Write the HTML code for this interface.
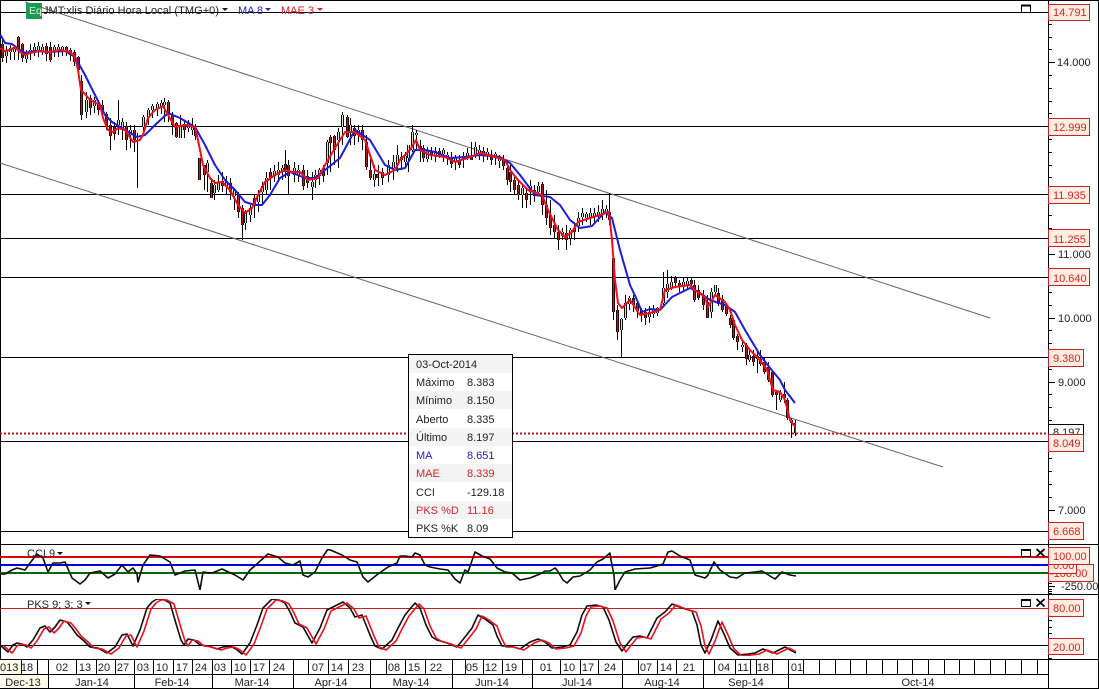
<!DOCTYPE html>
<html><head><meta charset="utf-8"><title>JMT chart</title>
<style>
html,body{margin:0;padding:0;background:#fff;width:1099px;height:689px;overflow:hidden}
svg{display:block}
text{font-family:"Liberation Sans",sans-serif;font-size:11px;fill:#222}
.r{fill:#d8232a}.b{fill:#2222cc}
.tag{fill:#fdeee0;stroke:#c8202c;stroke-width:1}
.c{text-anchor:middle}
.s{text-anchor:start}
</style></head><body>
<svg width="1099" height="689" viewBox="0 0 1099 689" xmlns="http://www.w3.org/2000/svg">
<defs>
<filter id="soft" x="0" y="0" width="100%" height="100%" filterUnits="objectBoundingBox"><feGaussianBlur stdDeviation="0.3"/></filter>
<path id="w" d="M2.5 40V62M6.5 46V63M10.5 45V60M14.5 46V60M18.5 36V60M22.5 43V62M26.5 50V63M30.5 44V60M34.5 43V56M38.5 42V57M42.5 44V55M46.5 43V61M50.5 42V62M54.5 45V57M58.5 44V57M62.5 46V56M66.5 46V56M70.5 48V61M74.5 50V66M78.5 56V78M81.5 75V120M86.5 92V118M90.5 95V115M94.5 97V113M98.5 100V115M102.5 100V118M106.5 112V130M110.5 118V150M114.5 122V140M118.5 100V135M122.5 118V140M126.5 122V150M130.5 125V148M134.5 125V152M137.5 133V188M143.5 115V135M148.5 108V125M152.5 104V118M157.5 102V116M161.5 100V114M164.5 98V122M168.5 100V122M172.5 112V135M176.5 122V138M180.5 115V138M184.5 120V138M188.5 120V132M192.5 118V135M195.5 124V140M199.5 158V180M204.5 165V190M207.5 160V192M211.5 178V198M214.5 180V200M218.5 175V192M222.5 172V192M226.5 176V195M230.5 178V200M234.5 188V210M238.5 192V218M242.5 205V240M245.5 210V230M250.5 205V222M254.5 195V218M258.5 190V212M262.5 182V205M266.5 172V195M270.5 168V190M274.5 165V182M278.5 162V182M282.5 165V180M285.5 150V178M288.5 160V195M294.5 162V182M298.5 165V182M303.5 165V190M307.5 170V188M312.5 172V200M315.5 170V188M319.5 168V185M323.5 165V182M327.5 140V175M330.5 135V172M334.5 135V165M338.5 128V168M342.5 112V145M347.5 115V138M350.5 118V145M354.5 125V145M358.5 125V142M362.5 125V150M366.5 135V170M370.5 155V180M374.5 165V187M378.5 165V186M382.5 168V185M388.5 160V182M393.5 155V180M397.5 145V172M401.5 152V170M405.5 152V168M408.5 145V172M412.5 125V152M416.5 130V150M420.5 140V162M423.5 145V162M427.5 147V162M431.5 147V160M435.5 147V162M439.5 148V158M443.5 148V162M447.5 152V165M451.5 152V168M455.5 155V170M459.5 155V168M463.5 152V168M467.5 148V160M471.5 142V160M475.5 142V158M479.5 145V160M483.5 147V162M487.5 148V160M491.5 150V165M495.5 152V165M499.5 155V168M503.5 155V170M507.5 160V185M510.5 165V192M514.5 175V195M518.5 180V200M522.5 185V208M526.5 188V208M530.5 180V205M534.5 185V202M538.5 182V195M542.5 182V215M546.5 190V225M550.5 200V235M554.5 215V238M558.5 225V250M562.5 228V240M566.5 225V250M570.5 228V245M574.5 222V240M578.5 212V232M582.5 208V225M586.5 212V222M590.5 208V225M594.5 208V222M598.5 205V222M602.5 200V220M606.5 205V218M609.5 193V225M613.5 255V320M617.5 305V340M621.5 318V357M625.5 295V320M629.5 296V310M633.5 295V312M637.5 300V318M641.5 308V322M645.5 308V325M649.5 306V323M653.5 305V318M657.5 307V316M663.5 272V305M667.5 270V298M671.5 276V290M675.5 276V288M679.5 280V292M683.5 278V290M687.5 278V290M691.5 277V288M694.5 280V302M698.5 285V300M703.5 290V310M707.5 295V318M711.5 288V318M715.5 285V296M718.5 288V306M722.5 295V312M726.5 303V316M730.5 315V328M733.5 318V340M737.5 334V350M742.5 340V352M746.5 343V365M749.5 350V362M753.5 350V366M757.5 352V373M760.5 350V366M764.5 358V374M768.5 362V382M772.5 370V397M776.5 390V410M780.5 390V402M784.5 382V403M787.5 398V420M791.5 418V438M795.5 420V436"/>
<path id="d" d="M2.5 44V58M18.5 37V50M22.5 44V58M46.5 46V54M50.5 47V60M66.5 47V52M70.5 50V55M74.5 52V62M78.5 57V70M81.5 81V115M90.5 98V108M98.5 103V110M102.5 105V112M106.5 114V126M110.5 125V136M114.5 127V134M126.5 126V140M134.5 130V140M168.5 102V115M172.5 115V125M176.5 123V137M184.5 124V130M195.5 128V136M199.5 158V180M204.5 165V175M211.5 183V198M222.5 181V186M230.5 183V192M238.5 194V212M242.5 208V225M254.5 198V206M270.5 172V178M285.5 164V172M288.5 165V176M303.5 170V186M307.5 176V183M323.5 168V176M330.5 137V143M334.5 136V150M347.5 117V137M354.5 128V136M362.5 130V140M366.5 142V167M370.5 170V178M377.5 174V178M382.5 172V178M401.5 157V160M420.5 146V150M423.5 148V158M431.5 151V155M439.5 151V155M451.5 158V164M459.5 160V165M471.5 157V160M483.5 151V156M491.5 155V160M503.5 160V166M507.5 168V180M510.5 172V182M514.5 180V190M518.5 185V195M526.5 193V200M534.5 190V196M542.5 184V205M546.5 205V218M550.5 215V228M554.5 225V232M558.5 232V240M566.5 233V240M574.5 228V232M609.5 212V220M613.5 258V312M617.5 310V332M633.5 298V305M637.5 303V311M641.5 310V314M645.5 312V318M675.5 278V283M679.5 283V287M691.5 280V284M694.5 285V300M698.5 290V298M703.5 295V305M707.5 302V318M718.5 293V304M722.5 299V310M726.5 305V314M730.5 318V325M733.5 320V338M737.5 336V342M746.5 345V359M753.5 356V362M760.5 359V364M764.5 362V372M768.5 367V380M772.5 372V395M776.5 392V395M784.5 394V398M787.5 400V418M795.5 423V433"/>
<path id="l" d="M6.5 50V56M10.5 48V52M14.5 49V52M26.5 53V59M30.5 50V53M34.5 47V52M38.5 46V50M42.5 47V51M54.5 47V52M58.5 47V51M62.5 47V50M86.5 100V112M94.5 100V106M118.5 120V125M122.5 122V128M130.5 130V135M143.5 117V127M148.5 110V117M152.5 106V110M157.5 104V108M161.5 103V107M164.5 102V105M180.5 127V138M188.5 123V128M192.5 125V130M207.5 163V172M214.5 185V193M218.5 183V190M226.5 181V186M234.5 190V196M245.5 213V223M250.5 208V215M258.5 194V202M262.5 186V192M266.5 178V190M274.5 171V176M278.5 170V175M282.5 168V172M294.5 168V175M298.5 170V175M312.5 182V187M315.5 175V180M319.5 170V176M327.5 142V163M338.5 132V140M342.5 115V127M350.5 125V132M358.5 130V135M374.5 174V180M388.5 165V175M393.5 162V168M397.5 155V165M405.5 156V162M408.5 145V158M412.5 132V150M416.5 133V135M427.5 150V159M435.5 151V155M443.5 150V154M447.5 155V158M455.5 158V162M463.5 156V160M467.5 153V156M475.5 147V155M479.5 150V153M487.5 152V155M495.5 154V157M499.5 158V161M522.5 188V195M530.5 186V192M538.5 186V192M562.5 232V236M570.5 230V238M578.5 218V226M582.5 213V217M586.5 214V218M590.5 213V218M594.5 213V217M598.5 212V216M602.5 209V214M606.5 209V213M621.5 319V330M625.5 303V318M629.5 298V304M649.5 312V317M653.5 310V314M657.5 308V313M663.5 288V303M667.5 284V292M671.5 282V287M683.5 282V287M687.5 281V285M711.5 292V312M715.5 285V292M742.5 345V347M749.5 355V360M757.5 356V359M780.5 393V400M791.5 420V423"/>
<path id="pk" d="M0 645L8 652L13 645L17 643L22 644L27 647L33 640L40 628L45 626L50 632L55 627L60 620L67 622L72 628L77 635L84 641L90 647L98 648L107 653L115 647L122 635L127 634L133 646L140 630L147 608L152 602L157 599L163 599L170 603L177 627L181 640L184 645L188 639L194 640L200 645L208 646L217 649L223 647L230 646L236 649L242 654L250 643L257 625L263 608L272 599L279 600L285 603L290 612L295 623L303 627L312 643L320 628L327 610L335 606L343 602L350 608L355 617L362 615L370 635L375 646L382 649L392 640L398 628L405 615L415 603L420 608L426 625L432 637L437 640L447 643L457 647L465 637L472 628L478 615L485 619L493 625L497 636L502 646L510 646L520 649L530 642L538 639L545 642L552 648L562 647L570 645L577 632L582 615L587 606L596 605L603 607L609 620L616 642L622 651L628 643L633 637L640 636L647 638L652 628L657 618L665 612L672 604L682 608L692 611L697 625L701 645L705 653L711 640L718 621L724 634L730 648L738 655L748 654L755 653L763 649L773 653L785 647L796 653"/>
<clipPath id="cp"><rect x="0" y="590" width="796" height="70"/></clipPath>
</defs>

<!-- frame -->
<path d="M0 .5H1099M.5 0V659M1048.5 0V689M1098.5 0V689M0 544.5H1099M0 594.5H1099M0 659.5H1099M0 674.5H1048M0 688.5H1099" stroke="#000" fill="none" stroke-width="1"/>

<!-- horizontals main -->
<path d="M0 12.5H1048M0 126.5H1048M0 194.5H1048M0 238.5H1048M0 277.5H1048M0 357.5H1048M0 441.5H1048M0 531.5H1048" stroke="#000" fill="none"/>

<!-- trend lines -->
<path d="M25 2L990 318M0 163L943 467" stroke="#666" stroke-width="1" fill="none"/>

<g filter="url(#soft)">
<!-- candles -->
<use href="#w" stroke="#000" fill="none"/>
<use href="#d" stroke="#2a0505" stroke-width="3" fill="none"/>
<use href="#d" stroke="#a32222" stroke-width="1" fill="none"/>
<use href="#l" stroke="#111" stroke-width="3" fill="none"/>
<use href="#l" stroke="#c9e6c9" stroke-width="1" fill="none"/>

<!-- MA -->
<path d="M0 34L5 43L12 44L20 50L25 53L35 51L50 52L65 51L75 57L85 75L95 95L105 115L112 122L125 130L137 137L145 135L155 125L168 113L180 118L195 127L205 145L215 165L225 180L235 190L245 202L255 205L262 205L270 195L280 178L290 172L305 178L315 178L325 170L340 158L355 130L370 140L385 165L395 170L405 168L415 150L425 150L435 152L450 158L465 157L480 155L500 157L510 163L520 175L535 195L550 197L560 205L570 220L580 228L592 226L605 212L612 218L620 250L630 285L637 300L642 312L650 309L660 310L672 297L690 288L700 293L710 300L725 305L735 312L745 330L760 355L770 368L780 380L785 390L795 403" stroke="#1c1cdc" stroke-width="2" fill="none" stroke-linejoin="round"/>
<!-- MAE -->
<path d="M0 48L4 51L10 50L15 47L20 52L25 55L30 53L40 51L50 52L60 50L70 52L75 57L78 70L81 90L84 93L90 100L100 105L103 118L108 130L113 132L118 128L125 130L133 142L140 140L143 135L148 118L155 110L163 106L168 115L175 127L185 125L195 127L198 140L203 165L210 178L215 183L222 182L230 190L238 205L245 213L252 208L258 195L265 182L275 175L285 170L292 172L300 172L308 180L318 178L325 165L335 148L345 132L355 132L365 140L375 170L385 175L395 170L400 160L410 150L416 140L420 150L430 155L445 157L455 162L470 157L480 153L495 157L505 160L510 170L518 180L528 190L542 195L548 210L558 230L565 237L572 232L578 222L590 218L600 215L609 212L612 240L615 280L618 303L622 308L630 300L640 315L650 313L660 310L665 290L675 287L690 285L695 290L705 297L708 307L715 295L725 302L730 310L735 325L742 340L750 350L760 360L767 370L773 390L780 392L785 400L790 420L796 428" stroke="#f0101c" stroke-width="2" fill="none" stroke-linejoin="round"/>
</g>

<!-- last price dotted -->
<path d="M0 433.5H1048" stroke="#c8101c" stroke-width="2" stroke-dasharray="2 2" fill="none"/>

<!-- CCI panel -->
<path d="M0 557H1048" stroke="#e00000" stroke-width="2"/>
<path d="M0 565H1048" stroke="#0000d8" stroke-width="2"/>
<path d="M0 573H1048" stroke="#006a00" stroke-width="2"/>
<g filter="url(#soft)">
<path d="M0 574L5 574L12 570L17 568L25 570L30 563L37 554L43 558L48 572L53 563L60 563L65 562L72 578L80 584L85 580L90 573L100 571L108 578L115 574L122 565L128 572L133 568L137 574L138 582L143 565L150 555L160 556L170 562L175 575L185 571L195 570L200 590L203 572L212 573L222 569L235 575L243 580L250 570L258 563L268 554L278 557L285 563L293 565L300 561L303 575L308 577L315 572L322 558L328 549L335 552L342 555L350 560L357 562L363 577L368 582L378 574L388 567L397 563L400 556L405 556L412 557L415 553L420 555L425 565L430 567L440 569L448 570L455 579L460 583L465 570L468 572L475 552L482 556L490 559L497 568L505 572L512 573L520 580L530 578L540 574L545 571L550 571L555 568L557 570L563 580L567 583L573 577L580 576L590 570L597 562L603 559L610 553L611 560L614 575L615 590L620 580L625 572L635 569L650 568L657 566L663 564L668 552L672 551L680 556L690 560L695 575L705 578L708 575L714 562L720 570L730 577L737 578L745 573L755 572L762 571L770 576L775 579L782 572L790 575L796 576" stroke="#111" stroke-width="1.6" fill="none" stroke-linejoin="round"/>
</g>

<!-- PKS panel -->
<path d="M0 608.5H1048" stroke="#c02020"/>
<path d="M0 645.5H1048" stroke="#000"/>
<g filter="url(#soft)">
<use href="#pk" stroke="#111" stroke-width="1.6" fill="none" stroke-linejoin="round"/>
<g clip-path="url(#cp)"><use href="#pk" transform="translate(4,1)" stroke="#f0101c" stroke-width="1.6" fill="none" stroke-linejoin="round"/></g>
</g>

<!-- time axis -->
<rect x="1" y="660" width="20" height="14" fill="#fdfbe9"/>
<rect x="1" y="675" width="47" height="13" fill="#fdfbe9"/>
<path d="M21.5 659V675M37.5 659V675M48.5 659V688M76.5 659V675M96.5 659V675M115.5 659V675M134.5 659V688M153.5 659V675M173.5 659V675M192.5 659V675M212.5 659V688M231.5 659V675M250.5 659V675M269.5 659V675M293.5 659V688M308.5 659V675M328.5 659V675M348.5 659V675M370.5 659V688M386.5 659V675M405.5 659V675M425.5 659V675M452.5 659V688M465.5 659V675M483.5 659V675M502.5 659V675M522.5 659V675M532.5 659V688M560.5 659V675M580.5 659V675M598.5 659V675M622.5 659V688M638.5 659V675M657.5 659V675M676.5 659V675M703.5 659V688M714.5 659V675M735.5 659V675M750.5 659V675M756.5 659V675M772.5 659V675M788.5 659V688M803.5 659V675M819.5 659V675M835.5 659V675M850.5 659V675M866.5 659V675M882.5 659V675M897.5 659V675M912.5 659V675M928.5 659V675M944.5 659V675M959.5 659V675M974.5 659V675M990.5 659V675M1005.5 659V675M1021.5 659V675M1037.5 659V675" stroke="#000" fill="none"/>
<text x="0" y="671" class="s">013</text><text x="27" y="671" class="c">18</text>
<text x="62" y="671" class="c">02</text><text x="85" y="671" class="c">13</text><text x="104" y="671" class="c">20</text><text x="123" y="671" class="c">27</text><text x="143" y="671" class="c">03</text><text x="162" y="671" class="c">10</text><text x="182" y="671" class="c">17</text><text x="201" y="671" class="c">24</text><text x="220" y="671" class="c">03</text><text x="240" y="671" class="c">10</text><text x="259" y="671" class="c">17</text><text x="279" y="671" class="c">24</text><text x="318" y="671" class="c">07</text><text x="337" y="671" class="c">14</text><text x="358" y="671" class="c">23</text><text x="394" y="671" class="c">08</text><text x="414" y="671" class="c">15</text><text x="436" y="671" class="c">22</text><text x="472" y="671" class="c">05</text><text x="491" y="671" class="c">12</text><text x="511" y="671" class="c">19</text><text x="546" y="671" class="c">01</text><text x="569" y="671" class="c">10</text><text x="588" y="671" class="c">17</text><text x="610" y="671" class="c">24</text><text x="646" y="671" class="c">07</text><text x="666" y="671" class="c">14</text><text x="689" y="671" class="c">21</text><text x="724" y="671" class="c">04</text><text x="743" y="671" class="c">11</text><text x="763" y="671" class="c">18</text><text x="797" y="671" class="c">01</text>
<text x="23" y="686" class="c">Dec-13</text><text x="92" y="686" class="c">Jan-14</text><text x="172" y="686" class="c">Feb-14</text><text x="252" y="686" class="c">Mar-14</text><text x="331" y="686" class="c">Apr-14</text><text x="411" y="686" class="c">May-14</text><text x="492" y="686" class="c">Jun-14</text><text x="577" y="686" class="c">Jul-14</text><text x="662" y="686" class="c">Aug-14</text><text x="746" y="686" class="c">Sep-14</text><text x="918" y="686" class="c">Oct-14</text>

<!-- axis ticks -->
<path d="M1048 11h4M1048 24h4M1048 37h4M1048 49h4M1048 62h7M1048 75h4M1048 88h4M1048 101h4M1048 113h4M1048 139h4M1048 152h4M1048 165h4M1048 177h4M1048 190h4M1048 203h4M1048 215h4M1048 228h4M1048 254h7M1048 292h4M1048 305h4M1048 318h7M1048 330h4M1048 343h4M1048 369h4M1048 382h7M1048 394h4M1048 407h4M1048 420h4M1048 458h4M1048 471h4M1048 484h4M1048 497h4M1048 510h7M1048 522h4M1048 583h4M1048 586h7M1048 589h4M1048 591h4M1048 593h4M1048 620h4M1048 627h4M1048 633h4M1048 658h4" stroke="#000" fill="none" transform="translate(0,.5)"/>
<text x="1057" y="66">14.000</text>
<text x="1058" y="258">11.000</text>
<text x="1058" y="322">10.000</text>
<text x="1058" y="386">9.000</text>
<text x="1058" y="514">7.000</text>
<text x="1061" y="590">-250.00</text>

<!-- price tags -->
<rect x="1048.5" y="424.5" width="35" height="17" fill="#fff" stroke="#000"/><text x="1053" y="436">8.197</text>
<rect class="tag" x="1048.5" y="4.5" width="41" height="16"/><text class="r" x="1053" y="16">14.791</text>
<rect class="tag" x="1048.5" y="118.5" width="41" height="17"/><text class="r" x="1053" y="131">12.999</text>
<rect class="tag" x="1048.5" y="186.5" width="41" height="17"/><text class="r" x="1053" y="199">11.935</text>
<rect class="tag" x="1048.5" y="229.5" width="41" height="17"/><text class="r" x="1053" y="243">11.255</text>
<rect class="tag" x="1048.5" y="268.5" width="41" height="17"/><text class="r" x="1053" y="282">10.640</text>
<rect class="tag" x="1048.5" y="349.5" width="35" height="17"/><text class="r" x="1053" y="362">9.380</text>
<rect class="tag" x="1048.5" y="434.5" width="35" height="17"/><text class="r" x="1053" y="447">8.049</text>
<rect class="tag" x="1048.5" y="522.5" width="35" height="17"/><text class="r" x="1053" y="535">6.668</text>
<rect class="tag" x="1048.5" y="564.5" width="45" height="17"/><text class="r" x="1050" y="577">-100.00</text>
<rect class="tag" x="1048.5" y="560.5" width="28" height="13"/><text class="r" x="1053" y="569">0.00</text>
<rect class="tag" x="1048.5" y="547.5" width="41" height="17"/><text class="r" x="1053" y="560">100.00</text>
<rect class="tag" x="1048.5" y="599.5" width="35" height="17"/><text class="r" x="1053" y="612">80.00</text>
<rect class="tag" x="1048.5" y="638.5" width="35" height="16"/><text class="r" x="1053" y="651">20.00</text>

<!-- panel buttons -->
<path d="M1021.5 12V5.5H1030.5V12" stroke="#000" fill="#fff" stroke-width="1"/>
<path d="M1021 4.5H1031" stroke="#000" stroke-width="2" transform="translate(0,1)"/>
<rect x="1021.5" y="549.5" width="9" height="7" fill="#fff" stroke="#000"/><path d="M1021 550H1031" stroke="#000" stroke-width="2"/>
<path d="M1036.5 549L1044.5 556.5M1044.5 549L1036.5 556.5" stroke="#000" stroke-width="1.8"/>
<rect x="1021.5" y="599.5" width="9" height="7" fill="#fff" stroke="#000"/><path d="M1021 600H1031" stroke="#000" stroke-width="2"/>
<path d="M1036.5 599L1044.5 606.5M1044.5 599L1036.5 606.5" stroke="#000" stroke-width="1.8"/>

<!-- header -->
<rect x="26" y="3" width="16" height="16" fill="#1f9a4e"/>
<text x="29" y="14" style="fill:#d8f4de;font-size:10.5px">Eq</text>
<text x="43" y="14" textLength="176" lengthAdjust="spacing">JMT:xlis Diário Hora Local (TMG+0)</text>
<path d="M222 8h6l-3 3z" fill="#111"/>
<text x="238" y="14" class="b">MA 8</text>
<path d="M265 8h6l-3 3z" fill="#2222cc"/>
<text x="281" y="14" class="r">MAE 3</text>
<path d="M317 8h6l-3 3z" fill="#d8232a"/>
<text x="27" y="557">CCI 9</text><path d="M57 552h6l-3 3z" fill="#111"/>
<text x="27" y="608">PKS 9; 3; 3</text><path d="M85 602h6l-3 3z" fill="#111"/>

<!-- tooltip -->
<rect x="408.5" y="354.5" width="104" height="183" fill="#fff" stroke="#000"/>
<path d="M409 355h103v18H409zM409 391h103v18H409zM409 428h103v18H409zM409 464h103v18H409zM409 501h103v18H409z" fill="#f4f4f4"/>
<text x="416" y="368">03-Oct-2014</text>
<text x="416" y="386">Máximo</text><text x="467" y="386">8.383</text>
<text x="416" y="404">Mínimo</text><text x="467" y="404">8.150</text>
<text x="416" y="423">Aberto</text><text x="467" y="423">8.335</text>
<text x="416" y="441">Último</text><text x="467" y="441">8.197</text>
<text x="416" y="459" class="b">MA</text><text x="467" y="459" class="b">8.651</text>
<text x="416" y="477" class="r">MAE</text><text x="467" y="477" class="r">8.339</text>
<text x="416" y="496">CCI</text><text x="467" y="496">-129.18</text>
<text x="416" y="514" class="r">PKS %D</text><text x="467" y="514" class="r">11.16</text>
<text x="416" y="532">PKS %K</text><text x="467" y="532">8.09</text>
</svg>
</body></html>
